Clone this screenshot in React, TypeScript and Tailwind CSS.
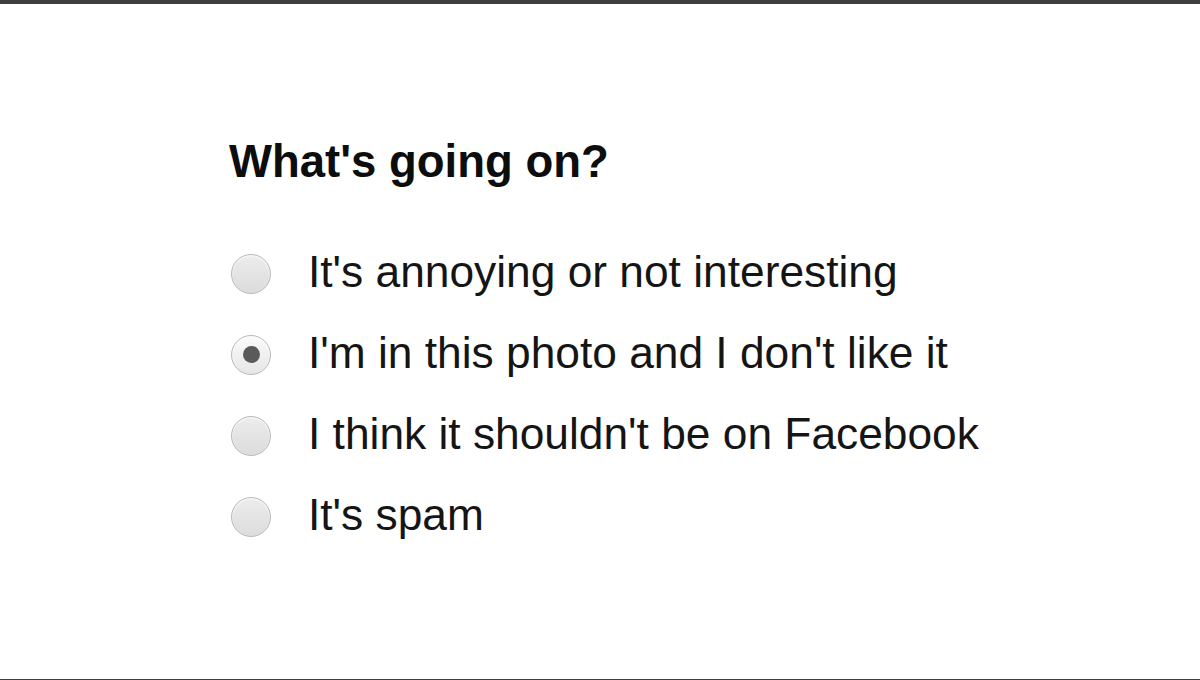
import { useState } from "react";

const options = [
    "It's annoying or not interesting",
    "I'm in this photo and I don't like it",
    "I think it shouldn't be on Facebook",
    "It's spam",
];

function Radio({ checked }: { checked: boolean }) {
    return (
        <span
            className={
                "mt-[4px] ml-[2px] flex h-[40px] w-[40px] shrink-0 items-center justify-center rounded-full border border-[#b9b9b9] shadow-[inset_0_1px_2px_rgba(255,255,255,0.9)] " +
                (checked
                    ? "bg-gradient-to-b from-[#fbfbfb] to-[#e6e6e6]"
                    : "bg-gradient-to-b from-[#ececec] to-[#dcdcdc]")
            }
        >
            {checked && <span className="h-[17px] w-[17px] rounded-full bg-[#5a5a5a]" />}
        </span>
    );
}

export default function App() {
    const [selected, setSelected] = useState(1);

    return (
        <div className="flex h-[680px] w-[1200px] flex-col bg-white font-['Liberation_Sans',Arial,sans-serif]">
            <div className="h-[4px] bg-[#3f3f3f]" />
            <div className="flex-1 pl-[229px] pt-[132px]">
                <h1 className="text-[45.5px] font-bold leading-[52px] text-[#0d0d0d]">What's going on?</h1>
                <div className="mt-[43px] flex flex-col">
                    {options.map((opt, i) => (
                        <button
                            key={opt}
                            onClick={() => setSelected(i)}
                            className="flex h-[81px] items-center gap-[37px] text-left"
                        >
                            <Radio checked={selected === i} />
                            <span className="text-[44.3px] leading-[50px] text-[#151515]">{opt}</span>
                        </button>
                    ))}
                </div>
            </div>
            <div className="h-px bg-[#3f3f3f]" />
        </div>
    );
}
